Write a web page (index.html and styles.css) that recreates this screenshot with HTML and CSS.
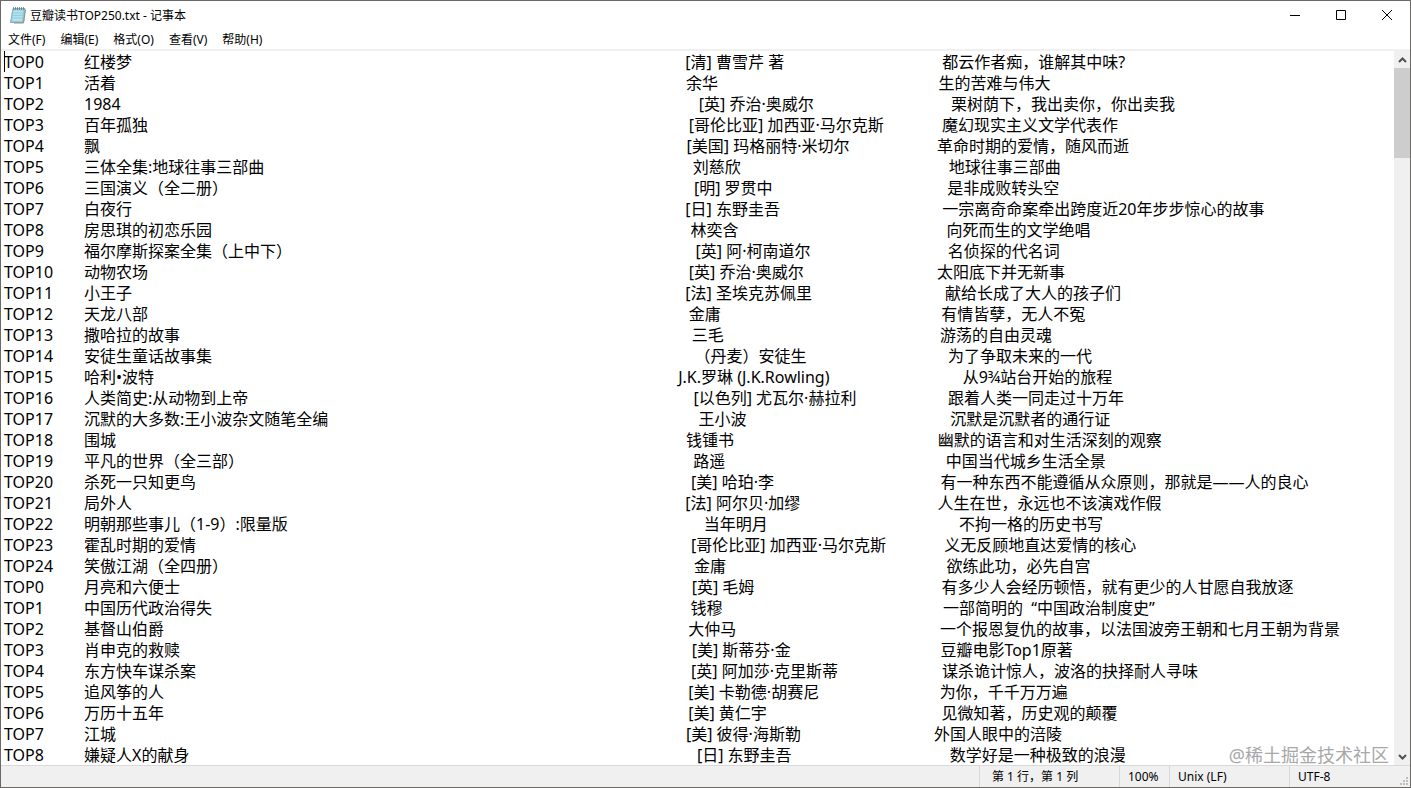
FILE: index.html
```html
<!DOCTYPE html>
<html lang="zh-CN">
<head>
  <meta charset="UTF-8">
  <meta name="viewport" content="width=device-width, initial-scale=1.0">
  <title>豆瓣读书TOP250.txt - 记事本</title>
  <link rel="stylesheet" href="styles.css">
</head>
<body>
  <div class="window">
    <header class="titlebar">
      <svg class="app-icon" width="18" height="18" viewBox="0 0 18 18">
        <path d="M4 2.5h12l-1.5 14H1.5z" fill="#8fc9dc" stroke="#7fb4c6" stroke-width="1"/>
        <path d="M4.5 4.500h9.500l-1.200 10.500H3.200z" fill="#b5e2ee"/>
        <path d="M15.500 3.500l1 .5-2 13H5" fill="none" stroke="#9a927c"/>
        <path d="M4.500 7h9M4.200 9.500h9M4 12h9" stroke="#8cc6d8" stroke-width=".8"/>
        <path d="M4.500 1v3M6.500 1v3M8.500 1v3M10.500 1v3M12.500 1v3M14.500 1v3" stroke="#68797f" stroke-width=".8"/>
      </svg>
      <h1 class="title">豆瓣读书TOP250.txt - 记事本</h1>
      <div class="window-buttons">
        <button type="button" aria-label="最小化">
          <svg width="10" height="10" viewBox="0 0 10 10"><path d="M0 5.500h10"/></svg>
        </button>
        <button type="button" aria-label="最大化">
          <svg width="10" height="10" viewBox="0 0 10 10"><path d="M.5.5h9v9h-9z"/></svg>
        </button>
        <button type="button" aria-label="关闭">
          <svg width="10" height="10" viewBox="0 0 10 10"><path d="M0 0l10 10M10 0L0 10"/></svg>
        </button>
      </div>
    </header>

    <nav class="menubar">
      <button type="button">文件(F)</button>
      <button type="button">编辑(E)</button>
      <button type="button">格式(O)</button>
      <button type="button">查看(V)</button>
      <button type="button">帮助(H)</button>
    </nav>

    <main class="editor">
      <textarea id="text" class="text" wrap="off" spellcheck="false" aria-label="文本"></textarea>
      <div class="caret"></div>
      <div class="scrollbar">
        <button type="button" aria-label="向上滚动">
          <svg width="9" height="6" viewBox="0 0 9 6"><path d="M1 5l3.500-3.500L8 5"/></svg>
        </button>
        <div class="track"><div class="thumb"></div></div>
        <button type="button" aria-label="向下滚动">
          <svg width="9" height="6" viewBox="0 0 9 6"><path d="M1 1l3.500 3.500L8 1"/></svg>
        </button>
      </div>
      <div class="watermark">@稀土掘金技术社区</div>
    </main>

    <footer class="statusbar">
      <span class="cell position">第 1 行，第 1 列</span>
      <span class="cell zoom">100%</span>
      <span class="cell ending">Unix (LF)</span>
      <span class="cell encoding">UTF-8</span>
      <svg class="grip" width="8" height="8" viewBox="0 0 8 8"><path d="M6 0h2v2H6zM3 3h2v2H3zM6 3h2v2H6zM0 6h2v2H0zM3 6h2v2H3zM6 6h2v2H6z"/></svg>
    </footer>
  </div>

  <script src="script.js"></script>
</body>
</html>
```
FILE: styles.css
```css
* {
  box-sizing: border-box;
}
body {
  margin: 0;
  font-family: "Noto Sans", "Noto Sans CJK SC", sans-serif;
  font-size: 12px;
  color: #000;
}
button {
  padding: 0;
  border: none;
  background: none;
  font: inherit;
  color: inherit;
}
.window {
  position: relative;
  display: flex;
  flex-direction: column;
  height: 100vh;
  border: 1px solid #6b6868;
  background: #fff;
}

/* title bar */
.titlebar {
  display: flex;
  align-items: center;
  height: 28px;
  flex: none;
  padding-left: 8px;
}
.app-icon {
  margin-right: 3px;
}
.title {
  flex: 1;
  margin: 0;
  font-size: 12px;
  font-weight: normal;
}
.window-buttons {
  display: flex;
  height: 100%;
}
.window-buttons button {
  display: flex;
  align-items: center;
  justify-content: center;
  width: 46px;
}
.window-buttons svg {
  fill: none;
  stroke: #000;
}

/* menu */
.menubar {
  display: flex;
  gap: 15px;
  height: 22px;
  flex: none;
  padding-left: 7px;
  border-bottom: 2px solid #f0f0f0;
}

/* text area */
.editor {
  position: relative;
  display: flex;
  flex: 1;
  min-height: 0;
}
.text {
  flex: 1;
  min-width: 0;
  padding: 1px 0 0 3px;
  border: none;
  outline: none;
  resize: none;
  overflow: hidden;
  background: #fff;
  color: #000;
  font-family: "Noto Sans", "Noto Sans CJK SC", sans-serif;
  font-size: 16px;
  line-height: 21px;
  tab-size: 80px;
  white-space: pre;
}
.caret {
  position: absolute;
  left: 3px;
  top: 0;
  width: 1px;
  height: 21px;
  background: #000;
}
.scrollbar {
  display: flex;
  flex-direction: column;
  width: 16px;
  background: #f0f0f0;
}
.scrollbar button {
  display: flex;
  align-items: center;
  justify-content: center;
  height: 17px;
}
.scrollbar svg {
  fill: none;
  stroke: #505050;
  stroke-width: 2;
}
.track {
  flex: 1;
}
.thumb {
  height: 90px;
  background: #cdcdcd;
}
.watermark {
  position: absolute;
  right: 21px;
  bottom: 0;
  font-size: 18px;
  line-height: 20px;
  color: #a8a8a8;
  text-shadow: 1px 1px 0 #fff;
}

/* status bar */
.statusbar {
  display: flex;
  justify-content: flex-end;
  position: relative;
  height: 22px;
  flex: none;
  border-top: 1px solid #d9d9d9;
  background: #f0f0f0;
  line-height: 21px;
}
.cell {
  padding-left: 8px;
  border-left: 1px solid #d9d9d9;
}
.position {
  width: 140px;
  padding-left: 12px;
}
.zoom {
  width: 50px;
}
.ending {
  width: 120px;
}
.encoding {
  width: 121px;
}
.grip {
  position: absolute;
  right: 2px;
  bottom: 2px;
  fill: #bfbfbf;
}
```
FILE: script.js
```js
// rank, title, author column, author, comment column, comment
const books = [
  ["TOP0", "红楼梦", 683, "[清] 曹雪芹 著", 938, "都云作者痴，谁解其中味?"],
  ["TOP1", "活着", 682, "余华", 934, "生的苦难与伟大"],
  ["TOP2", "1984", 696, "[英] 乔治·奥威尔", 946, "栗树荫下，我出卖你，你出卖我"],
  ["TOP3", "百年孤独", 684, "[哥伦比亚] 加西亚·马尔克斯", 939, "魔幻现实主义文学代表作"],
  ["TOP4", "飘", 681, "[美国] 玛格丽特·米切尔", 934, "革命时期的爱情，随风而逝"],
  ["TOP5", "三体全集:地球往事三部曲", 690, "刘慈欣", 943, "地球往事三部曲"],
  ["TOP6", "三国演义（全二册）", 689, "[明] 罗贯中", 943, "是非成败转头空"],
  ["TOP7", "白夜行", 683, "[日] 东野圭吾", 938, "一宗离奇命案牵出跨度近20年步步惊心的故事"],
  ["TOP8", "房思琪的初恋乐园", 688, "林奕含", 941, "向死而生的文学绝唱"],
  ["TOP9", "福尔摩斯探案全集（上中下）", 693, "[英] 阿·柯南道尔", 943, "名侦探的代名词"],
  ["TOP10", "动物农场", 684, "[英] 乔治·奥威尔", 934, "太阳底下并无新事"],
  ["TOP11", "小王子", 683, "[法] 圣埃克苏佩里", 940, "献给长成了大人的孩子们"],
  ["TOP12", "天龙八部", 684, "金庸", 936, "有情皆孽，无人不冤"],
  ["TOP13", "撒哈拉的故事", 686, "三毛", 938, "游荡的自由灵魂"],
  ["TOP14", "安徒生童话故事集", 689, "（丹麦）安徒生", 945, "为了争取未来的一代"],
  ["TOP15", "哈利•波特", 676, "J.K.罗琳 (J.K.Rowling)", 962, "从9¾站台开始的旅程"],
  ["TOP16", "人类简史:从动物到上帝", 689, "[以色列] 尤瓦尔·赫拉利", 942, "跟着人类一同走过十万年"],
  ["TOP17", "沉默的大多数:王小波杂文随笔全编", 694, "王小波", 947, "沉默是沉默者的通行证"],
  ["TOP18", "围城", 682, "钱锺书", 935, "幽默的语言和对生活深刻的观察"],
  ["TOP19", "平凡的世界（全三部）", 690, "路遥", 942, "中国当代城乡生活全景"],
  ["TOP20", "杀死一只知更鸟", 687, "[美] 哈珀·李", 935, "有一种东西不能遵循从众原则，那就是——人的良心"],
  ["TOP21", "局外人", 683, "[法] 阿尔贝·加缪", 933, "人生在世，永远也不该演戏作假"],
  ["TOP22", "明朝那些事儿（1-9）:限量版", 700, "当年明月", 954, "不拘一格的历史书写"],
  ["TOP23", "霍乱时期的爱情", 687, "[哥伦比亚] 加西亚·马尔克斯", 942, "义无反顾地直达爱情的核心"],
  ["TOP24", "笑傲江湖（全四册）", 689, "金庸", 941, "欲练此功，必先自宫"],
  ["TOP0", "月亮和六便士", 686, "[英] 毛姆", 939, "有多少人会经历顿悟，就有更少的人甘愿自我放逐"],
  ["TOP1", "中国历代政治得失", 688, "钱穆", 940, "一部简明的  “中国政治制度史”"],
  ["TOP2", "基督山伯爵", 685, "大仲马", 938, "一个报恩复仇的故事，以法国波旁王朝和七月王朝为背景"],
  ["TOP3", "肖申克的救赎", 686, "[美] 斯蒂芬·金", 935, "豆瓣电影Top1原著"],
  ["TOP4", "东方快车谋杀案", 687, "[英] 阿加莎·克里斯蒂", 939, "谋杀诡计惊人，波洛的抉择耐人寻味"],
  ["TOP5", "追风筝的人", 685, "[美] 卡勒德·胡赛尼", 936, "为你，千千万万遍"],
  ["TOP6", "万历十五年", 685, "[美] 黄仁宇", 939, "见微知著，历史观的颠覆"],
  ["TOP7", "江城", 682, "[美] 彼得·海斯勒", 932, "外国人眼中的涪陵"],
  ["TOP8", "嫌疑人X的献身", 691, "[日] 东野圭吾", 945, "数学好是一种极致的浪漫"]
];

const text = document.getElementById('text');
const ctx = document.createElement('canvas').getContext('2d');
ctx.font = '16px "Noto Sans", "Noto Sans CJK SC", sans-serif';
const space = ctx.measureText(' ').width;

// fill up with spaces from the end of the last field to the next column
function pad(from, to) {
  return ' '.repeat(Math.max(1, Math.round((to - from) / space)));
}

text.textContent = books.map(([rank, title, authorX, author, commentX, comment]) => {
  const line = title + pad(80 + ctx.measureText(title).width, authorX) + author;
  return rank + '\t' + line + pad(80 + ctx.measureText(line).width, commentX) + comment;
}).join('\n');
```
